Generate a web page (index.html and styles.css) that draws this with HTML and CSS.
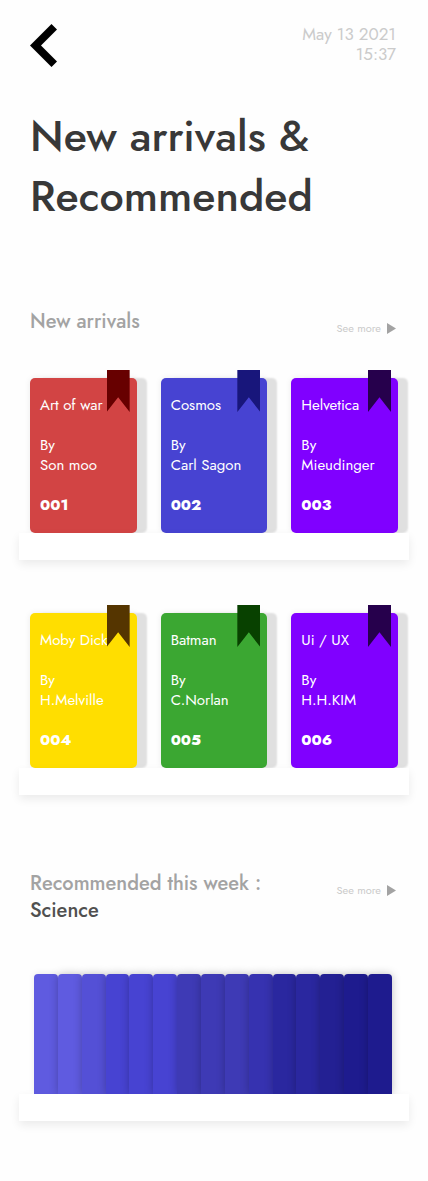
FILE: index.html
```html
<!DOCTYPE html>
<html lang="en">
<head>
<meta charset="utf-8">
<meta name="viewport" content="width=device-width, initial-scale=1">
<title>New arrivals &amp; Recommended</title>
<link rel="stylesheet" href="styles.css">
</head>
<body>
<header class="topbar">
  <button class="back" type="button" aria-label="Back">
    <svg class="back-icon" viewBox="0 0 27 43" aria-hidden="true"><path d="M21.5 0 27 5.5 11 21.500 27 37.500 21.500 43 0 21.500Z"/></svg>
  </button>
  <time class="date" datetime="2021-05-13T15:37">May 13 2021<br>15:37</time>
</header>
<main>
  <h1 class="title">New arrivals &amp;<br>Recommended</h1>

  <section class="section">
    <div class="section-head">
      <h2 class="section-title">New arrivals</h2>
      <a class="more" href="#">See more <svg class="arrow" viewBox="0 0 9 11" aria-hidden="true"><path d="M0 0 9 5.500 0 11Z"/></svg></a>
    </div>
    <div class="shelf">
      <div class="cards">
        <article class="card red"><h3 class="name">Art of war</h3><p class="author">By<br>Son moo</p><p class="number">001</p><span class="ribbon"></span></article>
        <article class="card blue"><h3 class="name">Cosmos</h3><p class="author">By<br>Carl Sagon</p><p class="number">002</p><span class="ribbon"></span></article>
        <article class="card violet"><h3 class="name">Helvetica</h3><p class="author">By<br>Mieudinger</p><p class="number">003</p><span class="ribbon"></span></article>
      </div>
      <div class="board"></div>
    </div>
    <div class="shelf">
      <div class="cards">
        <article class="card yellow"><h3 class="name">Moby Dick</h3><p class="author">By<br>H.Melville</p><p class="number">004</p><span class="ribbon"></span></article>
        <article class="card green"><h3 class="name">Batman</h3><p class="author">By<br>C.Norlan</p><p class="number">005</p><span class="ribbon"></span></article>
        <article class="card violet"><h3 class="name">Ui / UX</h3><p class="author">By<br>H.H.KIM</p><p class="number">006</p><span class="ribbon"></span></article>
      </div>
      <div class="board"></div>
    </div>
  </section>

  <section class="section">
    <div class="section-head">
      <h2 class="section-title">Recommended this week :<br><span class="topic">Science</span></h2>
      <a class="more" href="#">See more <svg class="arrow" viewBox="0 0 9 11" aria-hidden="true"><path d="M0 0 9 5.500 0 11Z"/></svg></a>
    </div>
    <div class="shelf spines-shelf">
      <div class="spines">
        <span class="spine tone-1"></span><span class="spine tone-1"></span><span class="spine tone-2"></span>
        <span class="spine tone-3"></span><span class="spine tone-3"></span><span class="spine tone-3"></span>
        <span class="spine tone-4"></span><span class="spine tone-4"></span><span class="spine tone-4"></span>
        <span class="spine tone-5"></span><span class="spine tone-6"></span><span class="spine tone-6"></span>
        <span class="spine tone-7"></span><span class="spine tone-8"></span><span class="spine tone-8"></span>
      </div>
      <div class="board"></div>
    </div>
  </section>
</main>
</body>
</html>
```
FILE: styles.css
```css
* { box-sizing: border-box; }
body {
  margin: 0;
  padding: 24px 0 60px;
  background: #fefefe;
  color: #383838;
  font-family: Futura, "Futura PT", Jost, Lato, sans-serif;
}
h1, h2, h3, p { margin: 0; font-weight: 400; }

.topbar {
  display: flex;
  justify-content: space-between;
  align-items: flex-start;
  padding: 0 32px 0 30px;
}
.back { padding: 0; border: 0; background: none; cursor: pointer; }
.back-icon { display: block; width: 27px; height: 43px; }
.date { color: #cbcbcb; font-size: 17px; line-height: 20px; text-align: right; }

.title {
  padding: 39px 30px 0;
  font-size: 43px;
  line-height: 60px;
  font-weight: 500;
}

.section { padding-top: 75px; }
.title + .section { padding-top: 82px; }
.section-head {
  display: flex;
  justify-content: space-between;
  align-items: flex-start;
  padding: 0 32px 0 30px;
}
.section-title { color: #a3a3a3; font-size: 20px; line-height: 27px; font-weight: 500; }
.topic { color: #505050; }
.more {
  display: flex;
  align-items: center;
  gap: 6px;
  padding-top: 12px;
  color: #cbcbcb;
  font-size: 11px;
  line-height: 16px;
  text-decoration: none;
}
.arrow { width: 9px; height: 11px; fill: #a3a3a3; }

.shelf { padding: 42px 19px 0; }
.shelf + .shelf { padding-top: 53px; }
.cards {
  display: grid;
  grid-template-columns: repeat(3, 1fr);
  gap: 24px;
  padding: 0 11px;
}
.card {
  position: relative;
  padding: 17px 0 18px 10px;
  border-radius: 5px;
  background: var(--cover);
  box-shadow: 10px 0 2px #e0e0e0, 0 0 6px #00000014;
  color: #fff;
  font-size: 15px;
  line-height: 20px;
}
.name { font-size: 15px; white-space: nowrap; }
.author, .number { margin-top: 20px; }
.number { font-weight: 800; }
.ribbon {
  position: absolute;
  top: -8px;
  right: 7px;
  width: 23px;
  height: 42px;
  background: var(--ribbon);
  clip-path: polygon(0 0, 100% 0, 100% 100%, 50% 65%, 0 100%);
}
.red { --cover: #d24444; --ribbon: #670000; }
.blue { --cover: #4743d2; --ribbon: #18167b; }
.violet { --cover: #8000ff; --ribbon: #26004c; }
.yellow { --cover: #ffde00; --ribbon: #553500; }
.green { --cover: #3ba732; --ribbon: #084100; }

.board {
  position: relative;
  height: 27px;
  background: #fff;
  box-shadow: 0 4px 10px #00000014;
}

.spines-shelf { padding-top: 50px; }
.spines { display: flex; height: 120px; padding: 0 17px 0 15px; }
.spine {
  flex: 1;
  border-radius: 4px 4px 0 0;
  background: var(--tone);
  box-shadow: 0 0 8px #00000040;
}
.spine:first-child { box-shadow: 0 -1px 6px #00000014; }
.tone-1 { --tone: #5f5be0; }
.tone-2 { --tone: #5450d6; }
.tone-3 { --tone: #4743d2; }
.tone-4 { --tone: #3e3ab5; }
.tone-5 { --tone: #3632b0; }
.tone-6 { --tone: #2a279f; }
.tone-7 { --tone: #232093; }
.tone-8 { --tone: #1e1b8e; }
```
